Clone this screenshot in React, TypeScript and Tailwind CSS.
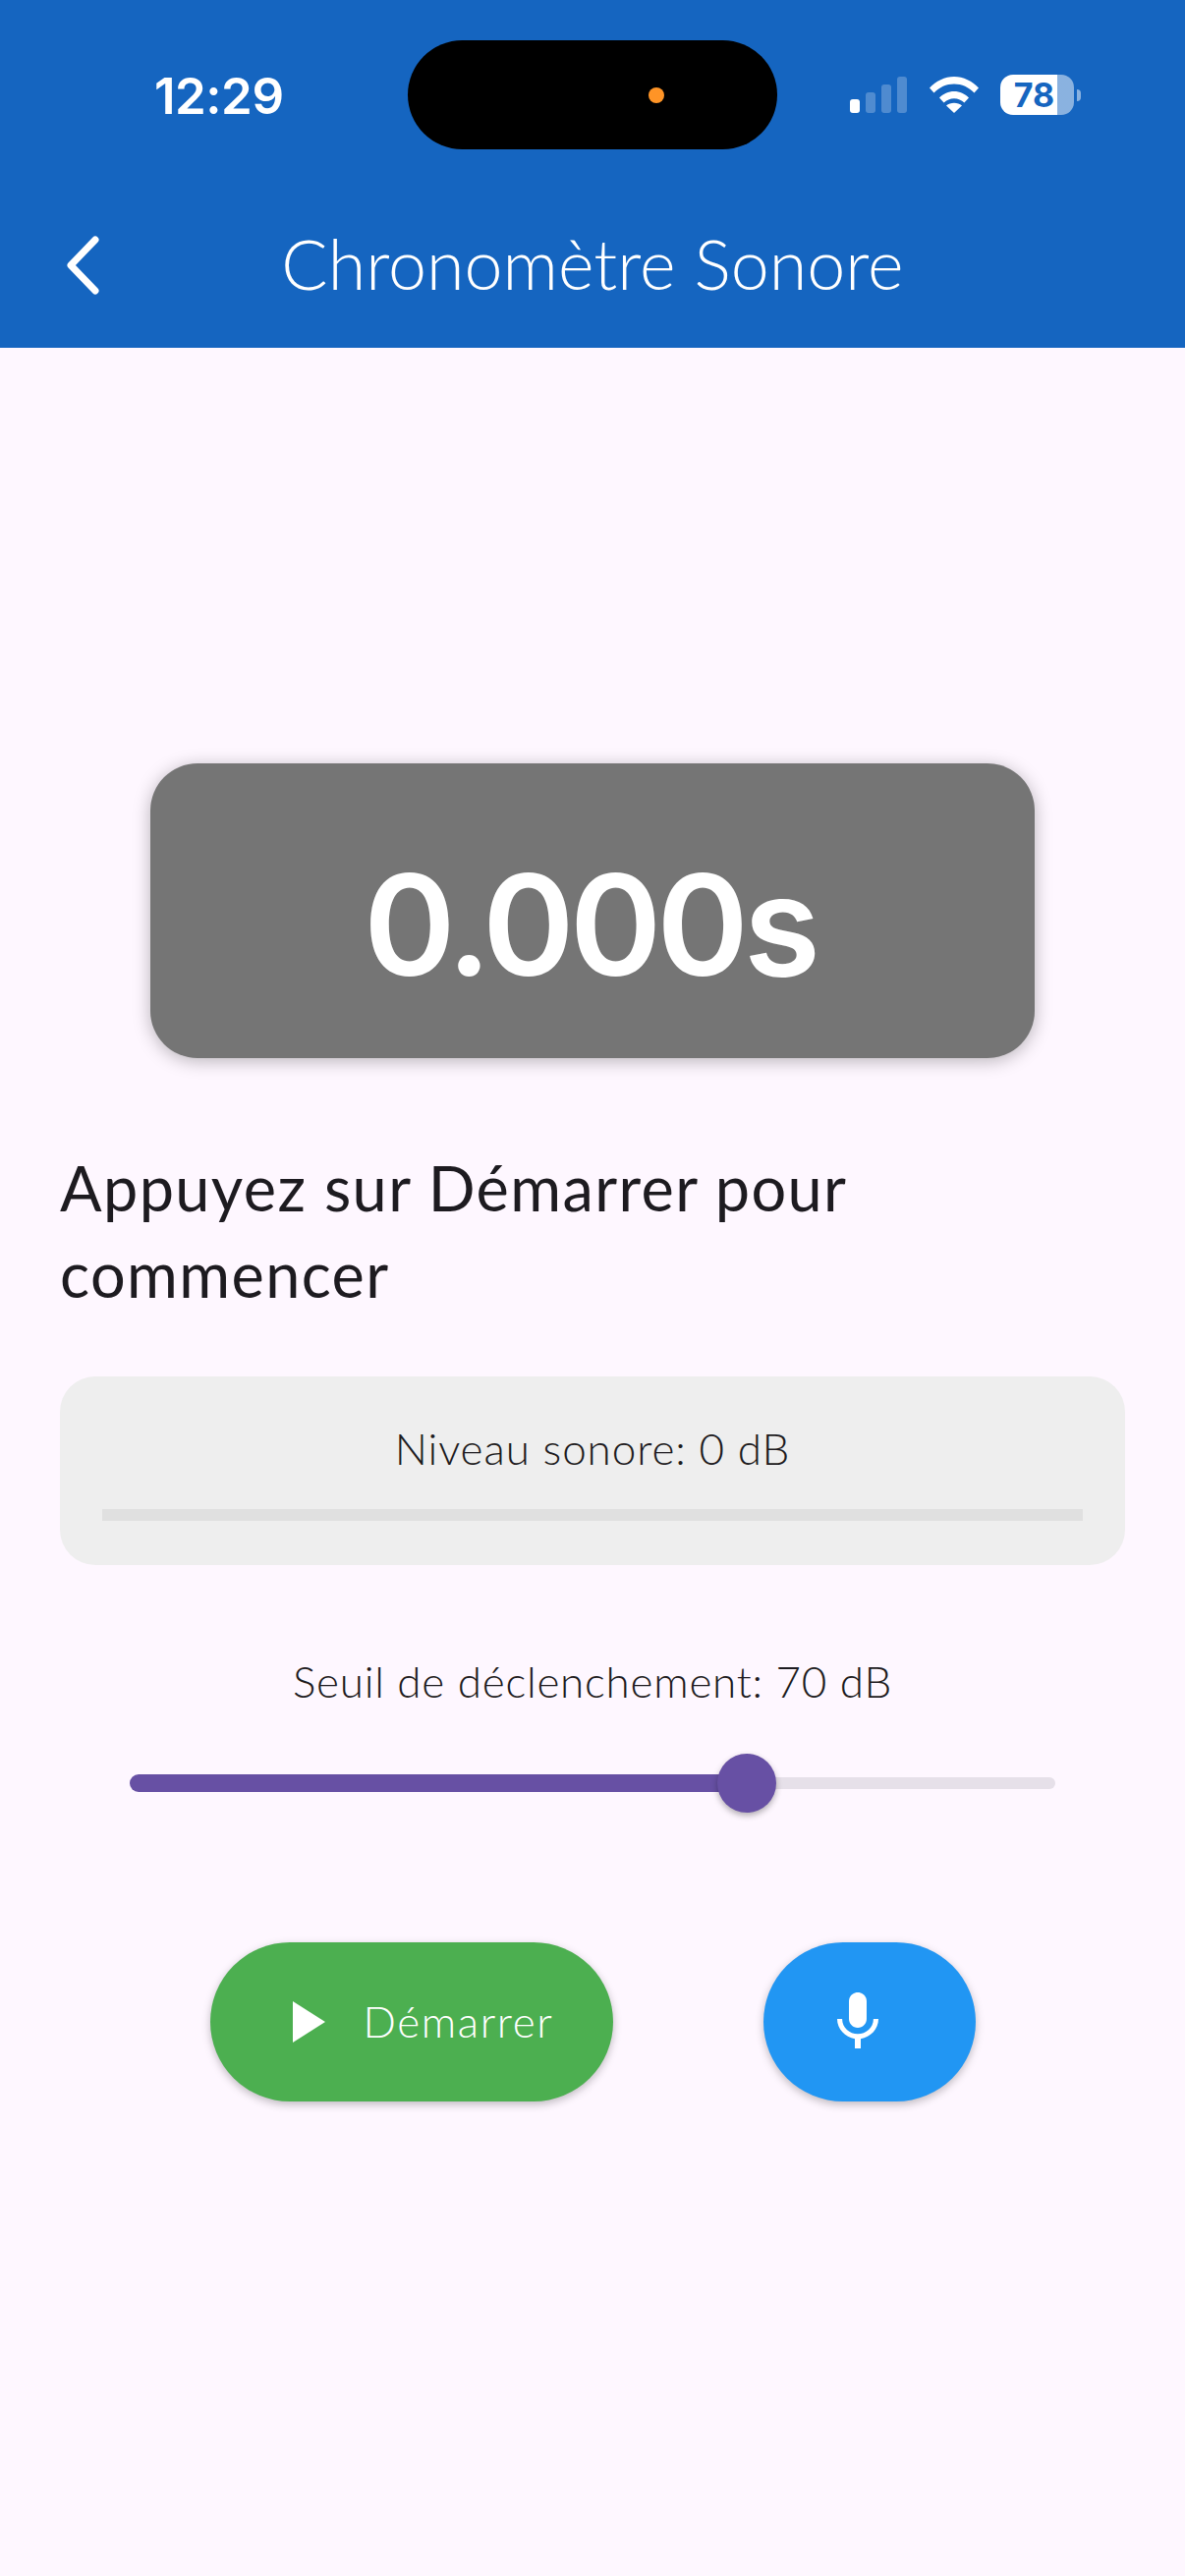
const sans = "font-['Lato','Noto_Sans',sans-serif]";

function StatusBar() {
  return (
    <div className="flex h-[195px] items-start pt-[41px]">
      <div className="flex h-[111px] w-[415px] items-center pl-[157px] pt-[2px] font-['Inter',sans-serif] text-[51px] font-semibold leading-none tracking-[-0.5px] text-white">
        12:29
      </div>
      <div className="flex h-[111px] w-[376px] items-center rounded-[56px] bg-black pl-[245px]">
        <div className="h-[16px] w-[16px] rounded-full bg-[#FF9426]" />
      </div>
      <div className="flex h-[111px] items-center pl-[74px]">
        <div className="flex h-[37px] items-end gap-[6px]">
          <div className="h-[14px] w-[10px] rounded-[3px] bg-white" />
          <div className="h-[21px] w-[10px] rounded-[3px] bg-white/25" />
          <div className="h-[29px] w-[10px] rounded-[3px] bg-white/25" />
          <div className="h-[37px] w-[10px] rounded-[3px] bg-white/25" />
        </div>
        <svg className="ml-[23px]" width="50" height="37" viewBox="0 0 50 37" fill="white">
          <path d="M0 11.5C6.5 4.5 15.5 0 25 0s18.500 4.500 25 11.500l-4.500 5C40 10.800 33 7.500 25 7.500S10 10.800 4.500 16.500z" />
          <path d="M10 21.500c4-4 9.200-6.500 15-6.500s11 2.500 15 6.500l-4.600 5c-2.800-2.600-6.400-4.200-10.400-4.200s-7.600 1.600-10.400 4.200z" />
          <path d="M17 29.500c2.200-1.700 5-2.700 8-2.700s5.800 1 8 2.700L25 37z" />
        </svg>
        <div className="ml-[22px] flex h-[41px] w-[75px] items-center justify-center rounded-[13px] bg-[linear-gradient(90deg,#fff_78%,rgba(255,255,255,0.5)_78%)] pr-[6px] font-['Inter',sans-serif] text-[34px] font-bold leading-none text-[#1565C0]">
          78
        </div>
        <div className="ml-[3px] h-[12px] w-[4px] rounded-r-full bg-white/50" />
      </div>
    </div>
  );
}

function Toolbar() {
  return (
    <div className="relative flex h-[159px] items-start justify-center">
      <svg className="absolute left-[66px] top-[45px]" width="36" height="60" viewBox="0 0 36 60" fill="none">
        <path d="M31 4 6 30l25 26" stroke="white" strokeWidth="7" strokeLinecap="round" strokeLinejoin="round" />
      </svg>
      <div className={`${sans} mt-[31px] text-[70px] font-light leading-[84px] text-white`}>Chronomètre Sonore</div>
    </div>
  );
}

export default function App() {
  return (
    <div className={`${sans} flex h-[2622px] w-[1206px] flex-col overflow-hidden bg-[#FEF7FF] text-[#1D1B20]`}>
      <header className="h-[354px] bg-[#1565C0]">
        <StatusBar />
        <Toolbar />
      </header>

      <main className="flex flex-col items-center px-[61px] pt-[423px]">
        <div className="flex h-[300px] w-[900px] items-center justify-center rounded-[48px] bg-[#757575] pr-[6px] pt-[27px] shadow-[0_3px_18px_rgba(0,0,0,0.28)]">
          <span className="font-['Inter',sans-serif] text-[142px] font-semibold leading-none tracking-[-5px] text-white">0.000s</span>
        </div>

        <p className="mt-[88px] w-full text-[63px] leading-[88px] tracking-[1.4px]">
          Appuyez sur Démarrer pour
          <br />
          commencer
        </p>

        <div className="mt-[60px] flex h-[192px] w-full flex-col rounded-[36px] bg-[#EEEEEE] px-[43px]">
          <div className="mt-[45px] text-center text-[44px] font-light leading-[56px] tracking-[0.9px]">Niveau sonore: 0 dB</div>
          <div className="mt-[34px] h-[12px] bg-[#E0E0E0]" />
        </div>

        <div className="mt-[90px] text-center text-[44px] font-light leading-[56px] tracking-[0.75px]">Seuil de déclenchement: 70 dB</div>

        {/* slider */}
        <div className="relative mt-[46px] flex h-[60px] w-[942px] items-center">
          <div className="h-[18px] w-[628px] rounded-l-full bg-[#6750A4]" />
          <div className="h-[12px] flex-1 rounded-r-full bg-[#E6E0E9]" />
          <div className="absolute left-[598px] top-0 h-[60px] w-[60px] rounded-full bg-[#6750A4] shadow-[0_3px_6px_rgba(0,0,0,0.3)]" />
        </div>

        <div className="mt-[132px] flex gap-[153px]">
          <button className="flex h-[162px] w-[410px] items-center gap-[24px] rounded-full bg-[#4CAF50] pl-[60px] text-[44px] font-light leading-[56px] tracking-[1.6px] text-white shadow-[0_3px_9px_rgba(0,0,0,0.25)]">
            <svg width="72" height="72" viewBox="0 0 24 24" fill="white">
              <path d="M8 5v14l11-7z" />
            </svg>
            <span className="mb-[3px]">Démarrer</span>
          </button>
          <button className="flex h-[162px] w-[216px] items-center rounded-full bg-[#2196F3] pl-[60px] shadow-[0_3px_9px_rgba(0,0,0,0.25)]">
            <svg width="72" height="72" viewBox="0 0 24 24" fill="white">
              <path d="M12 14c1.660 0 2.990-1.340 2.990-3L15 5c0-1.660-1.340-3-3-3S9 3.340 9 5v6c0 1.660 1.340 3 3 3zm5.300-3c0 3-2.540 5.100-5.300 5.100S6.700 14 6.700 11H5c0 3.410 2.720 6.230 6 6.720V21h2v-3.280c3.280-.48 6-3.300 6-6.720h-1.700z" />
            </svg>
          </button>
        </div>
      </main>
    </div>
  );
}
